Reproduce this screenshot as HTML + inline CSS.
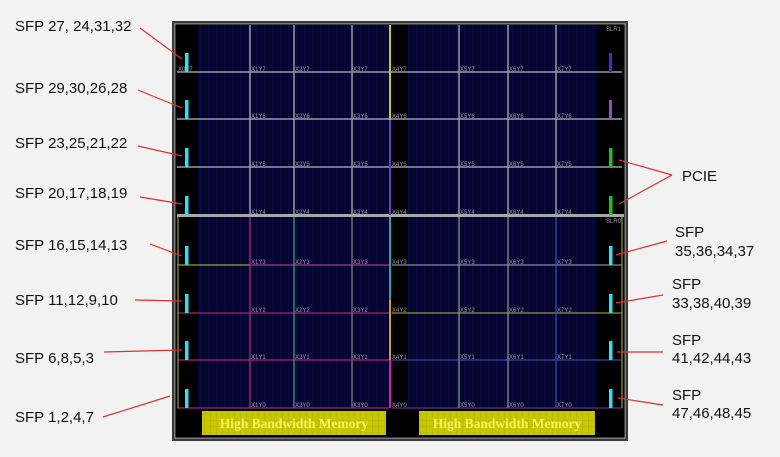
<!DOCTYPE html>
<html><head><meta charset="utf-8"><style>
html,body{margin:0;padding:0;background:#f2f2f2;}
svg{display:block}
.t{font-family:"Liberation Sans",Arial,sans-serif;font-size:15px;fill:#111}
.c{font-family:"Liberation Sans",sans-serif;font-size:6px}
.h{font-family:"Liberation Serif",serif;font-weight:bold;font-size:13.5px;fill:#f4f460}
</style></head><body>
<svg width="780" height="457" viewBox="0 0 780 457" xmlns="http://www.w3.org/2000/svg">
<defs>
<pattern id="st" width="8" height="10" patternUnits="userSpaceOnUse">
<rect width="8" height="10" fill="#050533"/><rect x="0" width="1" height="10" fill="#0a0a40"/><rect x="4" width="1" height="10" fill="#03032a"/>
</pattern>
<pattern id="hb" width="6" height="6" patternUnits="userSpaceOnUse">
<rect width="6" height="6" fill="#c8c800"/><path d="M0 0H6M0 0V6" stroke="#a4a400" stroke-width="0.6"/>
</pattern>
</defs>
<rect x="0" y="0" width="780" height="457" fill="#f2f2f2"/>
<rect x="172" y="21" width="456" height="420" fill="#3a3a3a"/>
<rect x="174" y="23" width="452" height="416" fill="#7a7a7a"/>
<rect x="175.5" y="24.5" width="449" height="413" fill="#000"/>
<rect x="198" y="25" width="191" height="383" fill="url(#st)"/>
<rect x="408" y="25" width="189" height="383" fill="url(#st)"/>
<g stroke="#9a9aaa" stroke-width="1.5" fill="none">
<path d="M177 72H622M177 119H622M177 167H622"/>
<path d="M250 25V215M294 25V215M352 25V215M459 25V215M508 25V215M556 25V215"/>
</g>
<path d="M177 215.5H624" stroke="#a8a8a8" stroke-width="3"/>
<g stroke-width="1.3" fill="none">
<path d="M177 265H250" stroke="#a0a030"/>
<path d="M250 265H389" stroke="#b03080"/>
<path d="M392 265H622" stroke="#8a8a9a"/>
<path d="M177 313H389" stroke="#b02070"/>
<path d="M392 313H622" stroke="#a09030"/>
<path d="M177 360H389" stroke="#b02070"/>
<path d="M392 360H622" stroke="#3a4aa0"/>
<path d="M177 408H389" stroke="#a02080"/>
<path d="M392 408H622" stroke="#6a2a8a"/>
<path d="M250 217V408" stroke="#a03080"/>
<path d="M294 217V408" stroke="#3a9a8a"/>
<path d="M352 217V408" stroke="#7a7a8a"/>
<path d="M459 217V408" stroke="#7a9a7a"/>
<path d="M508 217V408" stroke="#8a8a9a"/>
<path d="M556 217V408" stroke="#3a4aa0"/>
<path d="M622 217V408" stroke="#8a8a40"/>
<path d="M178 217V408" stroke="#909030"/>
</g>
<path d="M390 25V215" stroke="#c8c820" stroke-width="2"/>
<path d="M390 120V215" stroke="#6a40c0" stroke-width="2"/>
<path d="M390 217V300" stroke="#30a0a0" stroke-width="2"/>
<path d="M390 300V360" stroke="#d0a020" stroke-width="2"/>
<path d="M390 360V408" stroke="#d020b0" stroke-width="2"/>
<g class="c" fill="#9a9aaa">
<text x="178" y="71">X0Y7</text><text x="251" y="71">X1Y7</text><text x="295" y="71">X2Y7</text><text x="353" y="71">X3Y7</text><text x="392" y="71">X4Y7</text><text x="460" y="71">X5Y7</text><text x="509" y="71">X6Y7</text><text x="557" y="71">X7Y7</text>
<text x="251" y="118">X1Y6</text><text x="295" y="118">X2Y6</text><text x="353" y="118">X3Y6</text><text x="392" y="118">X4Y6</text><text x="460" y="118">X5Y6</text><text x="509" y="118">X6Y6</text><text x="557" y="118">X7Y6</text>
<text x="251" y="166">X1Y5</text><text x="295" y="166">X2Y5</text><text x="353" y="166">X3Y5</text><text x="392" y="166">X4Y5</text><text x="460" y="166">X5Y5</text><text x="509" y="166">X6Y5</text><text x="557" y="166">X7Y5</text>
<text x="251" y="214">X1Y4</text><text x="295" y="214">X2Y4</text><text x="353" y="214">X3Y4</text><text x="392" y="214">X4Y4</text><text x="460" y="214">X5Y4</text><text x="509" y="214">X6Y4</text><text x="557" y="214">X7Y4</text>
<text x="251" y="264">X1Y3</text><text x="295" y="264">X2Y3</text><text x="353" y="264">X3Y3</text><text x="392" y="264">X4Y3</text><text x="460" y="264">X5Y3</text><text x="509" y="264">X6Y3</text><text x="557" y="264">X7Y3</text>
<text x="251" y="312">X1Y2</text><text x="295" y="312">X2Y2</text><text x="353" y="312">X3Y2</text><text x="392" y="312">X4Y2</text><text x="460" y="312">X5Y2</text><text x="509" y="312">X6Y2</text><text x="557" y="312">X7Y2</text>
<text x="251" y="359">X1Y1</text><text x="295" y="359">X2Y1</text><text x="353" y="359">X3Y1</text><text x="392" y="359">X4Y1</text><text x="460" y="359">X5Y1</text><text x="509" y="359">X6Y1</text><text x="557" y="359">X7Y1</text>
<text x="251" y="407">X1Y0</text><text x="295" y="407">X2Y0</text><text x="353" y="407">X3Y0</text><text x="392" y="407">X4Y0</text><text x="460" y="407">X5Y0</text><text x="509" y="407">X6Y0</text><text x="557" y="407">X7Y0</text>
<text x="606" y="31">SLR1</text><text x="606" y="223">SLR0</text>
</g>
<g fill="#30e0f0">
<rect x="185" y="53" width="3.5" height="19"/><rect x="185" y="100" width="3.5" height="19"/>
<rect x="185" y="148" width="3.5" height="19"/><rect x="185" y="196" width="3.5" height="19"/>
<rect x="185" y="246" width="3.5" height="19"/><rect x="185" y="294" width="3.5" height="19"/>
<rect x="185" y="341" width="3.5" height="19"/><rect x="185" y="389" width="3.5" height="19"/>
<rect x="609" y="246" width="3.5" height="19"/><rect x="609" y="294" width="3.5" height="19"/>
<rect x="609" y="341" width="3.5" height="19"/><rect x="609" y="389" width="3.5" height="19"/>
</g>
<rect x="609" y="53" width="3" height="19" fill="#3030e0"/>
<rect x="609" y="100" width="3" height="19" fill="#9050c0"/>
<rect x="609" y="148" width="3.5" height="19" fill="#20c020"/>
<rect x="609" y="196" width="3.5" height="19" fill="#20c020"/>
<rect x="202" y="411" width="184" height="24" fill="url(#hb)"/>
<rect x="419" y="411" width="176" height="24" fill="url(#hb)"/>
<text class="h" x="294" y="428" text-anchor="middle">High Bandwidth Memory</text>
<text class="h" x="507" y="428" text-anchor="middle">High Bandwidth Memory</text>
<g class="t">
<text x="15" y="31">SFP 27, 24,31,32</text>
<text x="15" y="93">SFP 29,30,26,28</text>
<text x="15" y="148">SFP 23,25,21,22</text>
<text x="15" y="198">SFP 20,17,18,19</text>
<text x="15" y="250">SFP 16,15,14,13</text>
<text x="15" y="305">SFP 11,12,9,10</text>
<text x="15" y="363">SFP 6,8,5,3</text>
<text x="15" y="422">SFP 1,2,4,7</text>
<text x="682" y="181">PCIE</text>
<text x="675" y="237">SFP</text><text x="675" y="256">35,36,34,37</text>
<text x="672" y="289">SFP</text><text x="672" y="308">33,38,40,39</text>
<text x="672" y="345">SFP</text><text x="672" y="363">41,42,44,43</text>
<text x="672" y="400">SFP</text><text x="672" y="418">47,46,48,45</text>
</g>
<g stroke="#e03030" stroke-width="1.2" fill="#e03030">
<path d="M140 28L182 59"/><path d="M138 90L182 108"/><path d="M138 146L182 156"/><path d="M140 197L182 204"/>
<path d="M150 244L182 256"/><path d="M135 300L182 301"/><path d="M104 352L182 350"/><path d="M103 417L170 396"/>
<path d="M672 175L619 160"/><path d="M672 175L619 204"/>
<path d="M667 241L616 255"/><path d="M663 295L616 303"/><path d="M663 352L617 352"/><path d="M663 405L618 398"/>
</g>
</svg>
</body></html>
